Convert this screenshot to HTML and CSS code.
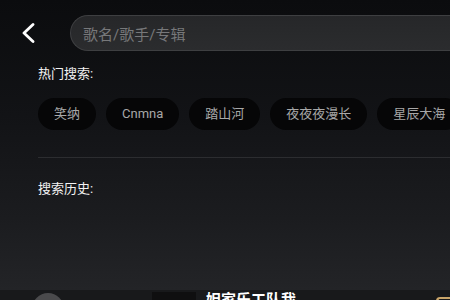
FILE: index.html
```html
<!DOCTYPE html>
<html lang="zh">
<head>
<meta charset="utf-8">
<link rel="stylesheet" href="styles.css">
</head>
<body>
<div class="page">
  <div class="main">
    <header class="top">
      <button class="back" aria-label="返回">
        <svg width="14" height="20" viewBox="0 0 14 20"><path d="M12 1.5 L3 10 L12 18.5" fill="none" stroke="#fff" stroke-width="2.8" stroke-linecap="round" stroke-linejoin="round"/></svg>
      </button>
      <div class="search">歌名/歌手/专辑</div>
    </header>
    <section class="hot">
      <h2 class="title">热门搜索:</h2>
      <div class="tags">
        <span class="tag">笑纳</span>
        <span class="tag">Cnmna</span>
        <span class="tag">踏山河</span>
        <span class="tag">夜夜夜漫长</span>
        <span class="tag">星辰大海</span>
      </div>
    </section>
    <div class="divider"></div>
    <section class="history">
      <h2 class="title">搜索历史:</h2>
    </section>
  </div>
  <footer class="player">
    <div class="disc"></div>
    <div class="cover"></div>
    <div class="song">妲家乐工队我</div>
    <div class="gold"></div>
  </footer>
</div>
</body>
</html>
```
FILE: styles.css
```css
* { box-sizing: border-box; margin: 0; padding: 0; }
html, body { width: 450px; height: 300px; overflow: hidden; background: #0c0d0f; }
body { font-family: Roboto, "Noto Sans CJK SC", sans-serif; color: #fff; }
.page { width: 450px; height: 300px; display: flex; flex-direction: column; overflow: hidden; }
.main {
  height: 290px; flex: none; overflow: hidden;
  background: linear-gradient(to bottom, #0b0c0e 0%, #121316 40%, #1b1c1f 75%, #232427 100%);
}
.top { display: flex; align-items: center; padding-top: 15px; height: 51px; }
.back { width: 70px; height: 36px; flex: none; background: none; border: 0; display: flex; align-items: center; padding-left: 21px; }
.search {
  width: 400px; height: 36px; flex: none;
  background: linear-gradient(to bottom, #262729, #2b2c2e);
  border: 1px solid #3e3f41; border-right: 0;
  border-radius: 18px 0 0 18px;
  padding-left: 12px; display: flex; align-items: center;
  font-size: 15px; color: #77787a;
}
.hot { padding: 15px 0 0 38px; }
.title { font-size: 13px; font-weight: 400; line-height: 16px; color: #f2f2f2; }
.tags { display: flex; gap: 10px; margin-top: 16px; white-space: nowrap; }
.tag {
  flex: none; height: 32px; line-height: 32px; padding: 0 16px;
  border-radius: 16px; background: #060607; color: #a8a8a8; font-size: 13px;
}
.divider { height: 1px; background: #2c2d30; margin: 27px 0 0 38px; }
.history { padding: 23px 0 0 38px; }
.player { height: 60px; flex: none; background: #18191b; position: relative; display: flex; align-items: flex-start; }
.disc { width: 32px; height: 32px; border-radius: 50%; background: #4a4a4c; margin: 3px 0 0 32px; }
.cover { width: 44px; height: 30px; background: #0f0f10; margin: 2px 0 0 88px; }
.song { margin: 1px 0 0 10px; font-size: 15px; font-weight: 700; line-height: 18px; color: #fff; }
.gold { position: absolute; right: 0; top: 7px; width: 14px; height: 14px; border-radius: 4px 0 0 0; border: 2px solid #c9a56a; border-right: 0; }
```
